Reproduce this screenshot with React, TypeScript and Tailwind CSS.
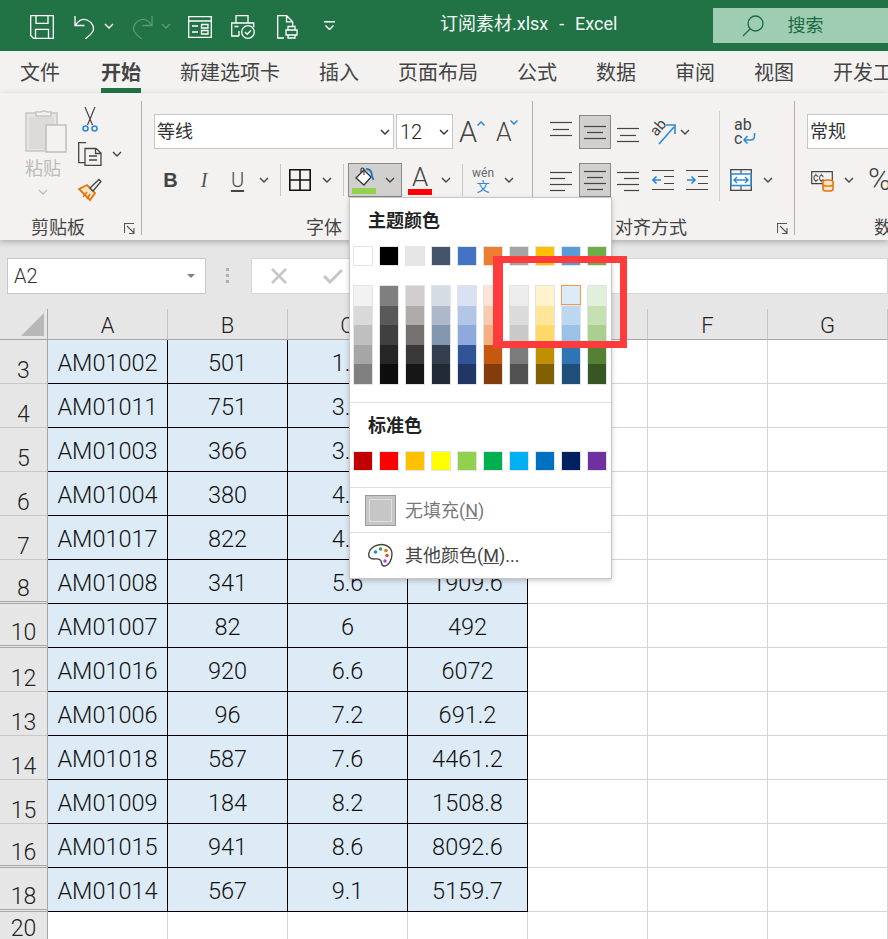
import React from "react";

const themeTop = ["#ffffff", "#000000", "#e7e6e6", "#44546a", "#4472c4", "#ed7d31", "#a5a5a5", "#ffc000", "#5b9bd5", "#70ad47"];
const shades = [
  ["#f2f2f2", "#d9d9d9", "#bfbfbf", "#a6a6a6", "#808080"],
  ["#7f7f7f", "#595959", "#404040", "#262626", "#0d0d0d"],
  ["#d0cece", "#aeabab", "#757171", "#3a3838", "#171616"],
  ["#d6dce4", "#adb9ca", "#8497b0", "#333f4f", "#222b35"],
  ["#d9e1f2", "#b4c6e7", "#8ea9db", "#305496", "#203764"],
  ["#fce4d6", "#f8cbad", "#f4b084", "#c65911", "#833c0c"],
  ["#ededed", "#dbdbdb", "#c9c9c9", "#7b7b7b", "#525252"],
  ["#fff2cc", "#ffe699", "#ffd966", "#bf8f00", "#806000"],
  ["#ddebf7", "#bdd7ee", "#9bc2e6", "#2f75b5", "#1f4e78"],
  ["#e2efda", "#c6e0b4", "#a9d08e", "#548235", "#375623"],
];
const standard = ["#c00000", "#ff0000", "#ffc000", "#ffff00", "#92d050", "#00b050", "#00b0f0", "#0070c0", "#002060", "#7030a0"];

const rows = [
  { n: 3, a: "AM01002", b: "501", c: "1.2", d: "601.2" },
  { n: 4, a: "AM01011", b: "751", c: "3.3", d: "2478.3" },
  { n: 5, a: "AM01003", b: "366", c: "3.6", d: "1317.6" },
  { n: 6, a: "AM01004", b: "380", c: "4.1", d: "1558" },
  { n: 7, a: "AM01017", b: "822", c: "4.5", d: "3699" },
  { n: 8, a: "AM01008", b: "341", c: "5.6", d: "1909.6", gap: true },
  { n: 10, a: "AM01007", b: "82", c: "6", d: "492", gap: true },
  { n: 12, a: "AM01016", b: "920", c: "6.6", d: "6072" },
  { n: 13, a: "AM01006", b: "96", c: "7.2", d: "691.2" },
  { n: 14, a: "AM01018", b: "587", c: "7.6", d: "4461.2" },
  { n: 15, a: "AM01009", b: "184", c: "8.2", d: "1508.8" },
  { n: 16, a: "AM01015", b: "941", c: "8.6", d: "8092.6", gap: true },
  { n: 18, a: "AM01014", b: "567", c: "9.1", d: "5159.7", gap: true },
];

function Chevron({ className = "", color = "#444444" }: { className?: string; color?: string }) {
  return (
    <svg width="10" height="6" viewBox="0 0 10 6" fill="none" className={"shrink-0 " + className}>
      <path d="M1 1l4 4 4-4" stroke={color} strokeWidth="1.4" />
    </svg>
  );
}

function Lines({ ys, className = "" }: { ys: [number, number, number][]; className?: string }) {
  return (
    <svg width="22" height="28" viewBox="0 0 22 28" fill="none" className={"shrink-0 " + className}>
      {ys.map(([x1, x2, y], i) => (
        <path key={i} d={`M${x1} ${y + 0.5}H${x2}`} stroke="#444444" strokeWidth="1.2" />
      ))}
    </svg>
  );
}

function Indent({ out, className = "" }: { out: boolean; className?: string }) {
  return (
    <svg width="22" height="24" viewBox="0 0 22 24" fill="none" className={"shrink-0 " + className}>
      <path d="M0 2.5H22M0 21.5H22M12 8.5H22M12 15.5H22" stroke="#444444" strokeWidth="1.2" />
      {out ? (
        <path d="M9 12H1M4.500 8.500L1 12l3.500 3.500" stroke="#2b88d8" strokeWidth="1.6" />
      ) : (
        <path d="M1 12H9M5.500 8.500L9 12l-3.500 3.500" stroke="#2b88d8" strokeWidth="1.6" />
      )}
    </svg>
  );
}

function Group({ width, label, labelClass, launcher, children }: { width: string; label: string; labelClass: string; launcher?: boolean; children: React.ReactNode }) {
  return (
    <div className={"shrink-0 h-[134px] border-r border-[#b3b0ad] flex flex-col " + width}>
      <div className="h-[120px]">{children}</div>
      <div className="flex items-center h-[14px]">
        <span className={"text-[18px] leading-[24px] text-[#444444] " + labelClass}>{label}</span>
        {launcher && (
          <svg width="11" height="11" viewBox="0 0 11 11" fill="none" className="ml-auto mr-[6px] mt-[1px]">
            <path d="M.5 10V.5H10M3 3l7 7M10 5v5.500H5" stroke="#555555" strokeWidth="1.1" />
          </svg>
        )}
      </div>
    </div>
  );
}

function Swatch({ color }: { color: string }) {
  return <div className="w-[20px] h-[20px] border border-[#e2e4e6]" style={{ background: color }} />;
}

export default function App() {
  return (
    <div className="relative w-[888px] h-[939px] overflow-hidden bg-white font-['Roboto','Noto_Sans_CJK_SC',sans-serif]">
      {/* title bar */}
      <div className="flex items-center h-[51px] bg-[#217346] pl-[30px] text-white">
        <div className="flex items-center pt-[3px]">
          <svg width="24" height="24" viewBox="0 0 24 24" fill="none" stroke="white" strokeWidth="1.3">
            <path d="M.7.7h22.600v22.600H3.500L.7 20.500zM6 .7v7.600h12V.7M5.500 23v-8.700h13V23" />
          </svg>
          <svg width="22" height="24" viewBox="0 0 22 24" fill="none" stroke="white" strokeWidth="1.3" className="ml-[20px]">
            <path d="M1 1v9.500h9.500M1.500 10C5 5 9 3.500 13 5c5 2 7.500 7 6 11-1 2-5 6-8 8" />
          </svg>
          <Chevron color="white" className="ml-[8px] mb-[3px]" />
          <svg width="22" height="24" viewBox="0 0 22 24" fill="none" stroke="#5a9a78" strokeWidth="1.3" className="ml-[17px]">
            <path d="M21 1v9.500h-9.500M20.500 10C17 5 13 3.500 9 5 4 7 1.500 12 3 16c1 2 5 6 8 8" />
          </svg>
          <Chevron color="#5a9a78" className="ml-[8px] mb-[3px]" />
          <svg width="24" height="22" viewBox="0 0 24 22" fill="none" stroke="white" strokeWidth="1.3" className="ml-[17px]">
            <path d="M.7.7h22.600v20.600H.7zM.7 5h22.600M4 10h6M13.500 8.500h6.500v3.500h-6.500zM4 16h6M13.500 14.500h6.500V18h-6.500z" />
          </svg>
          <svg width="24" height="24" viewBox="0 0 24 24" fill="none" stroke="white" strokeWidth="1.3" className="ml-[19px]">
            <path d="M5 8V.7h12V8M8 21H.7V8h22v4M3.500 11.500h4M8 21v-5" />
            <circle cx="17" cy="17" r="6.300" />
            <path d="M14 17l2.200 2.200 3.800-4" />
          </svg>
          <svg width="21" height="24" viewBox="0 0 21 24" fill="none" stroke="white" strokeWidth="1.3" className="ml-[22px]">
            <path d="M7 23H.7V.7h9l6 6V11M9.500.7v6.200h6M9 15h11v5H9zM11 15v-3.500h7V15M11 20v3h7v-3" />
          </svg>
          <svg width="11" height="9" viewBox="0 0 11 9" fill="none" stroke="white" strokeWidth="1.4" className="ml-[26px] mb-[3px]">
            <path d="M0 .7h11M1.500 4.500l4 4 4-4" />
          </svg>
        </div>
        <span className="ml-[105px] mb-[4px] text-[18px] leading-[24px] whitespace-pre [word-spacing:1px] text-[#f3f8f5]">订阅素材.xlsx  -  Excel</span>
        <div className="ml-[96px] flex items-center w-[175px] h-[35px] bg-[#9fcdb3] shrink-0">
          <svg width="22" height="22" viewBox="0 0 22 22" fill="none" stroke="#1d6b41" strokeWidth="1.3" className="ml-[29px]">
            <circle cx="13.500" cy="8.500" r="7.500" />
            <path d="M8 14L1 21" />
          </svg>
          <span className="ml-[23px] text-[18px] leading-[24px] text-[#1d6b41]">搜索</span>
        </div>
      </div>

      {/* tabs */}
      <div className="flex h-[42px] bg-[#f3f2f1] pl-[20px] text-[20px] text-[#444444] whitespace-nowrap overflow-hidden">
        <span className="pt-[9px] leading-[26px]">文件</span>
        <span className="ml-[41px] h-[42px] pt-[9px] leading-[26px] font-bold border-b-[5px] border-[#217346]">开始</span>
        <span className="ml-[39px] pt-[9px] leading-[26px]">新建选项卡</span>
        <span className="ml-[39px] pt-[9px] leading-[26px]">插入</span>
        <span className="ml-[39px] pt-[9px] leading-[26px]">页面布局</span>
        <span className="ml-[39px] pt-[9px] leading-[26px]">公式</span>
        <span className="ml-[39px] pt-[9px] leading-[26px]">数据</span>
        <span className="ml-[39px] pt-[9px] leading-[26px]">审阅</span>
        <span className="ml-[39px] pt-[9px] leading-[26px]">视图</span>
        <span className="ml-[39px] pt-[9px] leading-[26px]">开发工具</span>
      </div>

      {/* ribbon */}
      <div className="relative z-10 flex h-[147px] pt-[8px] bg-[#f3f2f1] overflow-hidden shadow-[0_2px_6px_rgba(0,0,0,0.25)]">
        <Group width="w-[142px]" label="剪贴板" labelClass="ml-[31px]" launcher>
          <div className="flex">
            <div className="flex flex-col items-center w-[36px] ml-[25px] shrink-0">
              <svg width="42" height="46" viewBox="0 0 42 46" fill="none" className="mt-[6px] ml-[5px] shrink-0">
                <path d="M1 6h31v38H1z" fill="#e6e5e3" stroke="#c8c6c4" strokeWidth="1.5" />
                <path d="M4 10h25v32H4z" fill="#dcdbd9" />
                <path d="M11 9V5h5a5 4 0 0 1 6 0h4v4z" fill="#f3f2f1" stroke="#c8c6c4" strokeWidth="1.5" />
                <path d="M21 18h20v27H21z" fill="#f3f2f1" stroke="#c0bfbd" strokeWidth="1.5" />
              </svg>
              <span className="mt-[4px] text-[18px] leading-[24px] text-[#bdbcba]">粘贴</span>
              <Chevron color="#bdbcba" className="mt-[8px]" />
            </div>
            <div className="flex flex-col ml-[17px]">
              <svg width="16" height="25" viewBox="0 0 16 25" fill="none" className="mt-[6px] ml-[4px]">
                <path d="M3 0l7.500 18M13 0L5.500 18" stroke="#444444" strokeWidth="1.2" />
                <circle cx="3.500" cy="21.500" r="2.500" stroke="#2b88d8" strokeWidth="1.600" />
                <circle cx="12.500" cy="21.500" r="2.500" stroke="#2b88d8" strokeWidth="1.600" />
              </svg>
              <div className="flex items-center mt-[10px]">
                <svg width="24" height="24" viewBox="0 0 24 24" fill="none" stroke="#444444" strokeWidth="1.300">
                  <path d="M8 .7H.7v20H7M7 6.500V23.300h16V11l-5-4.500z M17.500 6.500V11.500H23M11 14h8M11 18h8" />
                </svg>
                <Chevron className="ml-[10px]" />
              </div>
              <svg width="24" height="24" viewBox="0 0 24 24" fill="none" className="mt-[12px]">
                <path d="M1 11l8-4 8 8-5 7-11-11z" fill="#fbe3c9" stroke="#e3760c" strokeWidth="1.800" />
                <path d="M5 19l4-5M9 21l3-5" stroke="#e3760c" strokeWidth="1.500" />
                <path d="M12 10L21 1.500 23 3.500 15 13z" fill="#f3f2f1" stroke="#444444" strokeWidth="1.300" />
              </svg>
            </div>
          </div>
        </Group>

        <Group width="w-[391px]" label="字体" labelClass="ml-[164px]">
          <div className="pl-[12px] pt-[13px]">
            <div className="flex items-center">
              <div className="flex items-center justify-between w-[240px] h-[35px] bg-white border border-[#c6c6c6] pl-[2px] pr-[3px] shrink-0">
                <span className="text-[18px] text-[#333333]">等线</span>
                <Chevron color="#333333" />
              </div>
              <div className="ml-[2px] flex items-center justify-between w-[57px] h-[35px] bg-white border border-[#c6c6c6] pl-[3px] pr-[3px] shrink-0">
                <span className="text-[20px] font-light text-[#222222]">12</span>
                <Chevron color="#333333" />
              </div>
              <div className="relative ml-[6px] w-[26px] h-[34px] shrink-0">
                <span className="text-[29px] leading-[34px] font-light text-[#444444]">A</span>
                <svg width="8" height="5" viewBox="0 0 8 5" fill="none" className="absolute left-[18px] top-[6px]">
                  <path d="M.5 4.500L4 1l3.500 3.500" stroke="#2b88d8" strokeWidth="1.500" />
                </svg>
              </div>
              <div className="relative ml-[11px] w-[22px] h-[34px] shrink-0">
                <span className="text-[25px] leading-[36px] font-light text-[#444444]">A</span>
                <svg width="8" height="5" viewBox="0 0 8 5" fill="none" className="absolute left-[14px] top-[5px]">
                  <path d="M.5.500L4 4l3.500-3.500" stroke="#2b88d8" strokeWidth="1.500" />
                </svg>
              </div>
            </div>
            <div className="flex items-center h-[34px] mt-[14px]">
              <span className="w-[33px] text-center text-[20px] font-bold text-[#444444] font-['Liberation_Sans',sans-serif]">B</span>
              <span className="w-[34px] text-center text-[20px] italic text-[#555555] font-['Liberation_Serif',serif]">I</span>
              <span className="w-[33px] text-center text-[20px] leading-[22px] font-light text-[#444444] underline underline-offset-3">U</span>
              <Chevron className="ml-[5px]" />
              <div className="ml-[11px] w-px h-[32px] bg-[#c8c6c4] shrink-0" />
              <svg width="22" height="22" viewBox="0 0 22 22" fill="none" stroke="#111111" strokeWidth="1.600" className="ml-[8px] shrink-0">
                <path d="M.8.800h20.400v20.400H.8zM11 .8v20.400M.8 11h20.400" />
              </svg>
              <Chevron className="ml-[11px]" />
              <div className="ml-[11px] w-px h-[32px] bg-[#c8c6c4] shrink-0" />
              <div className="ml-[4px] flex items-center w-[54px] h-[34px] bg-[#d2d0ce] border border-[#8a8886] shrink-0">
                <div className="flex flex-col ml-[3px] w-[24px] shrink-0">
                  <svg width="24" height="21" viewBox="0 0 24 21" fill="none">
                    <path d="M4 11l8-8 7 7-7 8z" fill="white" stroke="#333333" strokeWidth="1.300" />
                    <path d="M9 6V2.500a1.500 1.500 0 0 1 3 0V8" stroke="#333333" strokeWidth="1.100" />
                    <path d="M14 2c4 0 6 3 6 7l1.500 4" stroke="#1f77c9" strokeWidth="1.900" />
                  </svg>
                  <div className="w-[24px] h-[6px] bg-[#92d050]" />
                </div>
                <Chevron className="ml-[9px]" />
              </div>
              <div className="flex flex-col items-center ml-[6px] w-[24px] shrink-0">
                <span className="text-[26px] leading-[23px] font-light text-[#444444]">A</span>
                <div className="w-[24px] h-[6px] bg-[#ff0000]" />
              </div>
              <Chevron className="ml-[9px]" />
              <div className="ml-[11px] w-px h-[32px] bg-[#c8c6c4] shrink-0" />
              <div className="flex flex-col items-center ml-[9px] w-[22px] shrink-0">
                <span className="text-[12px] leading-[13px] text-[#666666]">wén</span>
                <span className="text-[13px] leading-[14px] text-[#2b88d8]">文</span>
              </div>
              <Chevron className="ml-[10px]" />
            </div>
          </div>
        </Group>

        <Group width="w-[262px]" label="对齐方式" labelClass="ml-[82px]" launcher>
          <div className="pl-[17px] pt-[14px]">
            <div className="flex items-center h-[34px]">
              <Lines ys={[[0, 22, 4], [3, 19, 11], [0, 22, 17]]} />
              <div className="ml-[7px] flex items-center justify-center w-[32px] h-[34px] bg-[#d2d0ce] border border-[#8a8886] shrink-0">
                <Lines ys={[[0, 22, 8], [3, 19, 14], [0, 22, 20]]} />
              </div>
              <Lines ys={[[0, 22, 10], [3, 19, 17], [0, 22, 23]]} className="ml-[6px]" />
              <svg width="25" height="26" viewBox="0 0 25 26" fill="none" className="ml-[12px] shrink-0">
                <text x="0" y="14" fontSize="15" fill="#444444" transform="rotate(-50 7 10)">ab</text>
                <path d="M8 25L23 8M15 6h9v9" stroke="#2b88d8" strokeWidth="1.600" />
              </svg>
              <Chevron className="ml-[4px]" />
              <div className="ml-[29px] w-px h-[90px] bg-[#d2d0ce] mt-[48px] shrink-0" />
              <div className="ml-[14px] flex flex-col w-[22px] h-[28px] relative shrink-0">
                <span className="text-[16px] leading-[14px] text-[#444444]">ab</span>
                <span className="text-[16px] leading-[14px] text-[#444444]">c</span>
                <svg width="13" height="11" viewBox="0 0 13 11" fill="none" className="absolute left-[9px] top-[15px]">
                  <path d="M11.500 0v3c0 3-1 4-4 4H1M4.500 3L1 7l3.500 3.500" stroke="#2b88d8" strokeWidth="1.500" />
                </svg>
              </div>
            </div>
            <div className="flex items-center h-[34px] mt-[14px]">
              <Lines ys={[[0, 22, 6], [0, 15, 12], [0, 22, 18], [0, 15, 24]]} />
              <div className="ml-[7px] flex items-center justify-center w-[32px] h-[34px] bg-[#d2d0ce] border border-[#8a8886] shrink-0">
                <Lines ys={[[0, 22, 5], [3, 19, 11], [0, 22, 17], [3, 19, 23]]} />
              </div>
              <Lines ys={[[0, 22, 6], [7, 22, 12], [0, 22, 18], [7, 22, 24]]} className="ml-[6px]" />
              <Indent out className="ml-[13px]" />
              <Indent out={false} className="ml-[12px]" />
              <svg width="22" height="22" viewBox="0 0 22 22" fill="none" className="ml-[22px] shrink-0">
                <path d="M.7.700h20.600v20.600H.7z" stroke="#444444" strokeWidth="1.300" />
                <path d="M11 .7v4M11 17v4M.7 16.500H21" stroke="#444444" strokeWidth="1.100" />
                <path d="M1 5h20v11.500H1z" fill="white" stroke="#2b88d8" strokeWidth="1.600" />
                <path d="M4 11h14M7 8l-3 3 3 3M15 8l3 3-3 3" stroke="#2b88d8" strokeWidth="1.400" />
              </svg>
              <Chevron className="ml-[11px]" />
            </div>
          </div>
        </Group>

        <div className="shrink-0 w-[93px] h-[134px] flex flex-col">
          <div className="h-[120px] pl-[12px] pt-[13px]">
            <div className="flex items-center pl-[2px] w-[110px] h-[35px] bg-white border border-[#c6c6c6]">
              <span className="text-[18px] text-[#333333]">常规</span>
            </div>
            <div className="flex items-center h-[34px] mt-[14px]">
              <svg width="24" height="24" viewBox="0 0 24 24" fill="none" className="ml-[4px] shrink-0">
                <path d="M.7 3.700h20.600v12H.7z" fill="#f3f2f1" stroke="#444444" strokeWidth="1.200" />
                <text x="2" y="13" fontSize="10" fill="#333333">¢¢</text>
                <path d="M12 13.500c0-2 10-2 10 0v8c0 2-10 2-10 0z" fill="#fbe3c9" stroke="#e3760c" strokeWidth="1.600" />
                <path d="M12 17c1 1.500 9 1.500 10 0" stroke="#e3760c" strokeWidth="1.400" />
              </svg>
              <Chevron className="ml-[9px]" />
              <span className="ml-[14px] text-[31px] leading-[34px] font-light text-[#444444]">%</span>
            </div>
          </div>
          <div className="flex items-center h-[14px]">
            <span className="ml-[79px] text-[18px] leading-[24px] text-[#444444] whitespace-nowrap">数字</span>
          </div>
        </div>
      </div>

      {/* formula bar */}
      <div className="flex items-center h-[69px] bg-[#e6e6e6] pl-[7px] pt-[2px]">
        <div className="flex items-center justify-between w-[199px] h-[36px] bg-white border border-[#c6c6c6] pl-[6px] pr-[10px] shrink-0">
          <span className="text-[20px] font-light text-[#333333]">A2</span>
          <div className="w-0 h-0 border-x-[4px] border-x-transparent border-t-[4px] border-t-[#808080]" />
        </div>
        <div className="ml-[20px] flex flex-col gap-[3px] shrink-0">
          <div className="w-[3px] h-[3px] bg-[#b0b0b0]" />
          <div className="w-[3px] h-[3px] bg-[#b0b0b0]" />
          <div className="w-[3px] h-[3px] bg-[#b0b0b0]" />
        </div>
        <div className="ml-[22px] flex items-center flex-1 h-[36px] bg-white border border-[#d6d6d6] pl-[19px]">
          <svg width="16" height="16" viewBox="0 0 16 16" fill="none" stroke="#c8c6c4" strokeWidth="2.500">
            <path d="M1 1l14 14M15 1L1 15" />
          </svg>
          <svg width="20" height="16" viewBox="0 0 20 16" fill="none" stroke="#c8c6c4" strokeWidth="3" className="ml-[36px]">
            <path d="M1 8l6 6L19 2" />
          </svg>
        </div>
      </div>

      {/* sheet */}
      <div className="grid grid-cols-[48px_repeat(7,120px)] bg-white">
        <div className="relative h-[31px] bg-[#e6e6e6] border-r border-b border-[#a6a6a6]">
          <div className="absolute right-[3px] bottom-[3px] w-0 h-0 border-l-[23px] border-l-transparent border-b-[23px] border-b-[#b7b7b7]" />
        </div>
        {["A", "B", "C", "D", "E", "F", "G"].map((c) => (
          <div key={c} className="h-[31px] pt-[3px] flex items-center justify-center bg-[#e6e6e6] border-r border-b border-r-[#c4c4c4] border-b-[#a6a6a6] text-[22px] font-light text-[#222222]">
            {c}
          </div>
        ))}
        {rows.map((r) => (
          <React.Fragment key={r.n}>
            <div className={"h-[44px] flex items-end justify-center bg-[#e6e6e6] border-r border-[#a6a6a6] text-[23px] leading-[24px] font-light text-[#222222] " + (r.gap ? "border-b-[3px] border-b-[#a6a6a6] border-double" : "border-b border-b-[#c8c8c8]")}>
              {r.n}
            </div>
            {[r.a, r.b, r.c, r.d].map((v, i) => (
              <div key={i} className="h-[44px] pt-[4px] flex items-center justify-center bg-[#ddebf7] border-r border-b border-black text-[23.5px] font-light text-[#111111]">
                {v}
              </div>
            ))}
            <div className="h-[44px] border-r border-b border-[#d4d4d4]" />
            <div className="h-[44px] border-r border-b border-[#d4d4d4]" />
            <div className="h-[44px] border-r border-b border-[#d4d4d4]" />
          </React.Fragment>
        ))}
        <div className="h-[29px] flex items-end justify-center bg-[#e6e6e6] border-r border-[#a6a6a6] text-[23px] leading-[24px] font-light text-[#222222]">20</div>
        {[0, 1, 2, 3, 4, 5, 6].map((i) => (
          <div key={i} className="h-[29px] border-r border-[#d4d4d4]" />
        ))}
      </div>

      {/* fill colour dropdown */}
      <div className="absolute z-20 left-[349px] top-[197px] w-[263px] h-[382px] bg-white border border-[#c8c6c4] shadow-[0_2px_5px_rgba(0,0,0,0.2)]">
        <div className="mt-[11px] ml-[18px] h-[24px] text-[18px] leading-[24px] font-bold text-[#222222]">主题颜色</div>
        <div className="mt-[13px] ml-[3px] flex gap-[6px]">
          {themeTop.map((c) => (
            <Swatch key={c} color={c} />
          ))}
        </div>
        <div className="mt-[19px] ml-[3px] flex gap-[6px]">
          {shades.map((col, i) => (
            <div key={i} className="relative w-[20px] h-[100px] border border-[#e2e4e6]">
              {col.map((c) => (
                <div key={c} className="h-[19.600px]" style={{ background: c }} />
              ))}
              {i === 8 && <div className="absolute -left-px -top-px w-[20px] h-[20px] border border-[#f79646]" />}
            </div>
          ))}
        </div>
        <div className="mt-[17px] h-px bg-[#e1dfdd]" />
        <div className="mt-[11px] ml-[18px] h-[24px] text-[18px] leading-[24px] font-bold text-[#222222]">标准色</div>
        <div className="mt-[13px] ml-[3px] flex gap-[6px]">
          {standard.map((c) => (
            <Swatch key={c} color={c} />
          ))}
        </div>
        <div className="mt-[16px] h-px bg-[#e1dfdd]" />
        <div className="flex items-center h-[44px] pl-[15px]">
          <div className="flex items-center justify-center w-[31px] h-[31px] bg-[#c6c6c6] border border-[#9a9a9a] shrink-0">
            <div className="w-[23px] h-[23px] border border-[#e0e0e0]" />
          </div>
          <span className="ml-[9px] text-[18px] text-[#7a7a7a]">
            无填充(<span className="underline">N</span>)
          </span>
        </div>
        <div className="h-px bg-[#e1dfdd]" />
        <div className="flex items-center h-[44px] pl-[18px]">
          <svg width="25" height="25" viewBox="0 0 25 25" fill="none" className="shrink-0">
            <path d="M10 2c7-2 14 2 14 9 0 7-4 12-8 12-3 0-2-3-3-5-1-3-4-2-7-2-4 0-6-2-5-6 0-3 4-7 9-8z" fill="white" stroke="#444444" strokeWidth="1.400" />
            <circle cx="7.500" cy="9" r="1.800" fill="#2b88d8" />
            <circle cx="12.500" cy="6" r="1.800" fill="#3fa14a" />
            <circle cx="18" cy="7.500" r="1.800" fill="#e3760c" />
            <circle cx="19" cy="12.500" r="1.800" fill="#e8434f" />
            <circle cx="17" cy="18" r="1.800" fill="#a84fc0" />
          </svg>
          <span className="ml-[12px] text-[18px] text-[#444444]">
            其他颜色(<span className="underline">M</span>)...
          </span>
        </div>
      </div>

      {/* red highlight annotation */}
      <div className="absolute z-30 left-[493px] top-[256px] w-[134px] h-[92px] border-[7px] border-l-[10px] border-[#ff3b3b]" />
    </div>
  );
}
